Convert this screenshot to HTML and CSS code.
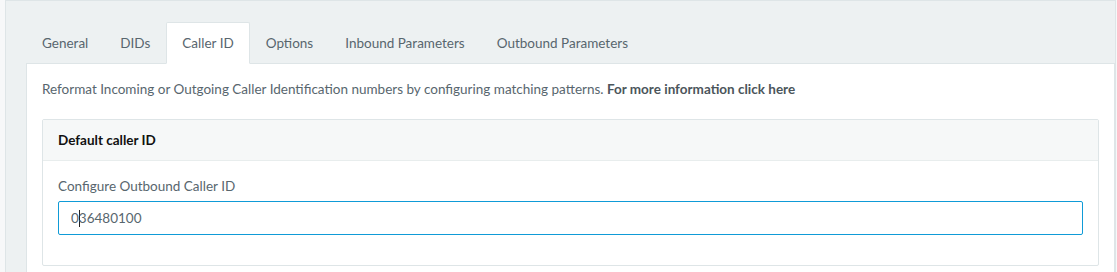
FILE: index.html
```html
<!DOCTYPE html>
<html lang="en">
<head>
    <meta charset="UTF-8">
    <meta name="viewport" content="width=device-width, initial-scale=1.0">
    <title>Caller ID</title>
    <link rel="stylesheet" href="styles.css">
</head>
<body>
    <div class="wrapper">
        <ul class="nav-tabs">
            <li><a href="#">General</a></li>
            <li><a href="#">DIDs</a></li>
            <li class="active"><a href="#">Caller ID</a></li>
            <li><a href="#">Options</a></li>
            <li><a href="#">Inbound Parameters</a></li>
            <li><a href="#">Outbound Parameters</a></li>
        </ul>

        <div class="tab-content">
            <p class="intro">Reformat Incoming or Outgoing Caller Identification numbers by configuring matching patterns. <a href="#">For more information click here</a></p>

            <div class="panel">
                <div class="panel-heading">Default caller ID</div>
                <div class="panel-body">
                    <div class="form-group">
                        <label for="callerId">Configure Outbound Caller ID</label>
                        <div class="form-control focus" id="callerId">0<span class="caret"></span>36480100</div>
                    </div>
                </div>
            </div>
        </div>
    </div>
</body>
</html>
```

FILE: styles.css
```css
* {
    margin: 0;
    padding: 0;
    box-sizing: border-box;
}

body {
    font-family: Lato, "Open Sans", sans-serif;
    font-size: 13.5px;
    line-height: 20px;
    color: #58666e;
    background: #f7f8f9;
    padding-left: 5px;
    padding-right: 1px;
    height: 272px;
    overflow: hidden;
}

.wrapper {
    background: #edf1f2;
    border-top: 1px solid #dee5e7;
    border-left: 1px solid #dee5e7;
    border-right: 1px solid #dee5e7;
    padding: 21px 0 0 20px;
    min-height: 272px;
}

.nav-tabs {
    list-style: none;
    display: flex;
    border-bottom: 1px solid #dee5e7;
}

.nav-tabs li {
    margin-bottom: -1px;
}

.nav-tabs a {
    display: block;
    padding: 10px 15px;
    border: 1px solid transparent;
    border-radius: 2px 2px 0 0;
    color: #58666e;
    text-decoration: none;
}

.nav-tabs .active a {
    background: #fff;
    border-color: #dee5e7;
    border-bottom-color: #fff;
}

.tab-content {
    background: #fff;
    border: 1px solid #dee5e7;
    border-top: none;
    padding: 15px 15px 15px;
}

.intro {
    margin-bottom: 20px;
}

.intro a {
    color: #4b555b;
    font-weight: bold;
    text-decoration: none;
}

.panel {
    border: 1px solid #dee5e7;
    border-radius: 2px;
}

.panel-heading {
    background: #f6f8f8;
    border-bottom: 1px solid #e8eded;
    padding: 10px 15px;
    color: #111;
    font-weight: bold;
}

.panel-body {
    padding: 15px;
}

.form-group {
    margin-bottom: 15px;
}

label {
    display: block;
    margin-bottom: 5px;
}

.form-control {
    height: 34px;
    padding: 6px 12px;
    border: 1px solid #cfdadd;
    border-radius: 2px;
    color: #58666e;
}

.form-control.focus {
    border-color: #0f9bd7;
}

.caret {
    display: inline-block;
    width: 1px;
    height: 17px;
    margin-right: -1px;
    background: #222;
    vertical-align: -4px;
}
```
